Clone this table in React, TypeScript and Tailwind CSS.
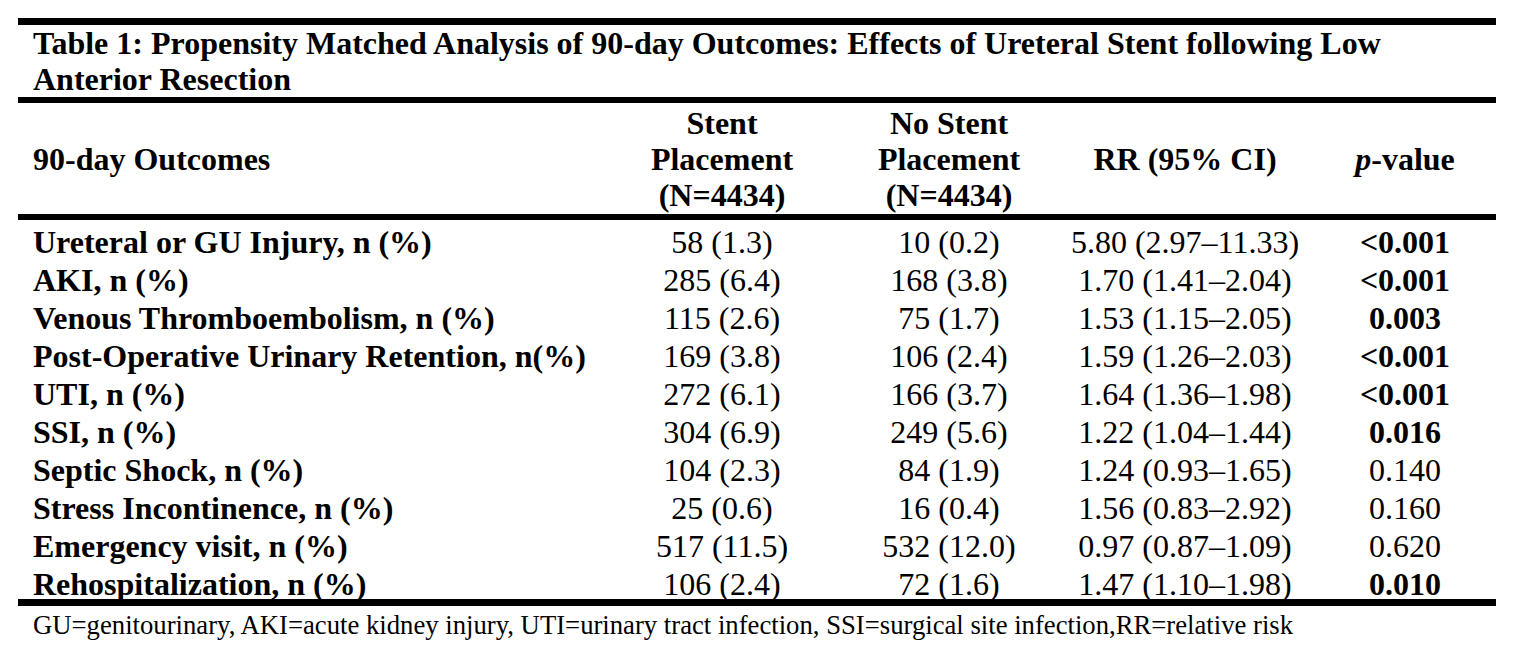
import React from "react";

type Row = { label: string; a: string; b: string; rr: string; p: string; sig: boolean };

const rows: Row[] = [
  { label: "Ureteral or GU Injury, n (%)", a: "58 (1.3)", b: "10 (0.2)", rr: "5.80 (2.97–11.33)", p: "<0.001", sig: true },
  { label: "AKI, n (%)", a: "285 (6.4)", b: "168 (3.8)", rr: "1.70 (1.41–2.04)", p: "<0.001", sig: true },
  { label: "Venous Thromboembolism, n (%)", a: "115 (2.6)", b: "75 (1.7)", rr: "1.53 (1.15–2.05)", p: "0.003", sig: true },
  { label: "Post-Operative Urinary Retention, n(%)", a: "169 (3.8)", b: "106 (2.4)", rr: "1.59 (1.26–2.03)", p: "<0.001", sig: true },
  { label: "UTI, n (%)", a: "272 (6.1)", b: "166 (3.7)", rr: "1.64 (1.36–1.98)", p: "<0.001", sig: true },
  { label: "SSI, n (%)", a: "304 (6.9)", b: "249 (5.6)", rr: "1.22 (1.04–1.44)", p: "0.016", sig: true },
  { label: "Septic Shock, n (%)", a: "104 (2.3)", b: "84 (1.9)", rr: "1.24 (0.93–1.65)", p: "0.140", sig: false },
  { label: "Stress Incontinence, n (%)", a: "25 (0.6)", b: "16 (0.4)", rr: "1.56 (0.83–2.92)", p: "0.160", sig: false },
  { label: "Emergency visit, n (%)", a: "517 (11.5)", b: "532 (12.0)", rr: "0.97 (0.87–1.09)", p: "0.620", sig: false },
  { label: "Rehospitalization, n (%)", a: "106 (2.4)", b: "72 (1.6)", rr: "1.47 (1.10–1.98)", p: "0.010", sig: true },
];

const cols = "grid grid-cols-[594px_220px_234px_238px_192px]";

export default function App() {
  return (
    <div
      className="w-[1520px] h-[670px] bg-white text-black overflow-hidden"
      style={{ fontFamily: '"Liberation Serif", "Times New Roman", serif' }}
    >
      <div className="ml-[18px] mt-[18px] w-[1478px]">
        <div className="h-[7px] bg-black" />
        <div className="pl-[15px] text-[32px] leading-[36px] font-bold">
          Table 1: Propensity Matched Analysis of 90-day Outcomes: Effects of Ureteral Stent following Low
          <br />
          Anterior Resection
        </div>
        <div className="h-[6px] bg-black" />
        <div className={`${cols} text-[32px] leading-[36px] font-bold pt-[2px] pb-[1px]`}>
          <div className="pl-[15px] flex items-center">90-day Outcomes</div>
          <div className="text-center">
            Stent
            <br />
            Placement
            <br />
            (N=4434)
          </div>
          <div className="text-center">
            No Stent
            <br />
            Placement
            <br />
            (N=4434)
          </div>
          <div className="flex items-center justify-center">RR (95% CI)</div>
          <div className="flex items-center justify-center pl-[10px]">
            <span>
              <i>p</i>-value
            </span>
          </div>
        </div>
        <div className="h-[6px] bg-black" />
        <div className="pt-[3px] text-[32px] leading-[38px]">
          {rows.map((r) => (
            <div key={r.label} className={cols}>
              <div className="pl-[15px] font-bold whitespace-nowrap">{r.label}</div>
              <div className="text-center">{r.a}</div>
              <div className="text-center">{r.b}</div>
              <div className="text-center">{r.rr}</div>
              <div className={`text-center pl-[10px] ${r.sig ? "font-bold" : ""}`}>{r.p}</div>
            </div>
          ))}
        </div>
        <div className="h-[7px] bg-black -mt-[4px]" />
        <div className="pl-[15px] pt-[4px] text-[26.7px] leading-[30px] whitespace-nowrap">
          GU=genitourinary, AKI=acute kidney injury, UTI=urinary tract infection, SSI=surgical site infection,RR=relative risk
        </div>
      </div>
    </div>
  );
}
